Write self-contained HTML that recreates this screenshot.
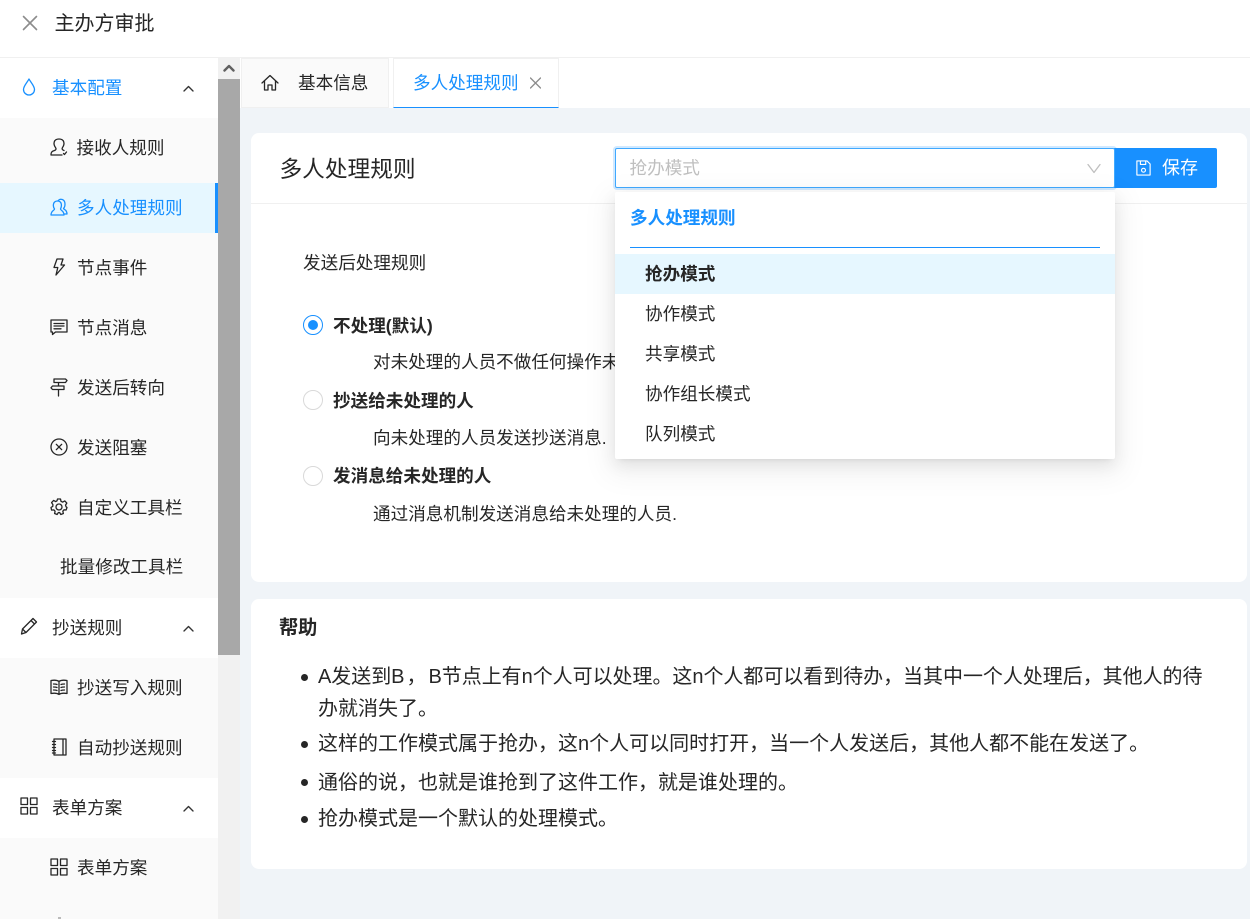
<!DOCTYPE html>
<html><head><meta charset="utf-8"><style>
*{box-sizing:border-box}
html,body{margin:0;padding:0;width:1250px;height:919px;overflow:hidden;background:#fff;
font-family:"Liberation Sans","Noto Sans CJK SC",sans-serif;color:#262626;font-size:17.6px}
.a{position:absolute;white-space:nowrap}
.t{position:absolute;white-space:nowrap;line-height:24px;height:24px}
.h{font-size:20px}
svg{position:absolute;fill:none;stroke:currentColor;stroke-width:1.3;stroke-linecap:round;stroke-linejoin:round}
b{font-weight:700}
</style></head><body>
<!-- header -->
<svg style="left:22px;top:15px;color:#8c8c8c;stroke-width:1.6" width="16" height="16" viewBox="0 0 16 16"><path d="M1.500 1.500l13 13M14.500 1.500l-13 13"/></svg>
<div class="t" style="left:54.500px;top:12px;font-size:20px">主办方审批</div>
<div class="a" style="left:0;top:57px;width:1250px;height:1px;background:#f0f0f0"></div>

<!-- sidebar -->
<div class="a" style="left:0;top:118px;width:218px;height:480px;background:#fafafa"></div>
<div class="a" style="left:0;top:658px;width:218px;height:120px;background:#fafafa"></div>
<div class="a" style="left:0;top:838px;width:218px;height:81px;background:#fafafa"></div>
<div class="a" style="left:0;top:183px;width:218px;height:50px;background:#e6f7ff"></div>
<div class="a" style="left:215px;top:183px;width:3px;height:50px;background:#1890ff"></div>
<div class="a" style="left:218px;top:58px;width:22px;height:861px;background:#f1f1f1"></div>
<div class="a" style="left:218px;top:79px;width:22px;height:576px;background:#a8a8a8"></div>
<svg style="left:223px;top:63px;color:#606060;stroke-width:2.400" width="12" height="10" viewBox="0 0 12 10"><path d="M1.500 7.500L6 3l4.500 4.500"/></svg>

<svg style="left:22px;top:78px;color:#1890ff" width="14" height="18" viewBox="0 0 14 18"><path d="M7 1C5.500 4 1.500 8 1.500 11.500a5.500 5.500 0 0 0 11 0C12.500 8 8.500 4 7 1z"/></svg>
<div class="t" style="left:52px;top:76px;color:#1890ff">基本配置</div>
<svg style="left:182px;top:84px;color:#333;stroke-width:1.400" width="13" height="9" viewBox="0 0 13 9"><path d="M2 7l4.500-4.500L11 7"/></svg>

<svg style="left:50px;top:138px" width="18" height="18" viewBox="0 0 18 18"><path d="M5.500 9.500C3 6 3.500 1 9 1s6 5 3.500 8.500c-1 1.500 0 2.500 1.500 3M5.500 9.500c1 1.500.5 2.500-1 3-2 .7-3.500 1-3.500 4.500h11"/><path d="M13.500 15.500l1 1 2-2.500"/></svg>
<div class="t" style="left:76.500px;top:136px">接收人规则</div>

<svg style="left:50px;top:198px;color:#1890ff" width="18" height="18" viewBox="0 0 18 18"><path d="M8 3c2-3 7-2 7 3 0 2-.5 3.500-1.500 4.500 0 1 3.500 1 3.500 5.500h-3M4.500 11C2.500 8 3 3 7.500 3S12 8 10.500 11c0 1.500 3.500 1.500 3.500 6H1c0-4.500 3.500-4.500 3.500-6z"/></svg>
<div class="t" style="left:77px;top:196px;color:#1890ff">多人处理规则</div>

<svg style="left:52px;top:258px" width="14" height="18" viewBox="0 0 14 18"><path d="M5 1h6L9 7h3.500L4 17l1.800-7.500H2z"/></svg>
<div class="t" style="left:77px;top:256px">节点事件</div>

<svg style="left:50px;top:319px" width="18" height="17" viewBox="0 0 18 17"><path d="M1 1h16v12H5.500L2.500 15.500V13H1z"/><path d="M4 4.500h10M4 7h10M4 9.800h7"/></svg>
<div class="t" style="left:77px;top:316px">节点消息</div>

<svg style="left:50px;top:378px" width="18" height="19" viewBox="0 0 18 19"><path d="M4 1h11.500L17 2.500 15.500 4.500H4zM14 8H2.500L1 9.800l1.500 1.700H14zM8.500 4.500V8M8.500 11.500V18"/></svg>
<div class="t" style="left:77px;top:376px">发送后转向</div>

<svg style="left:50px;top:438px" width="18" height="18" viewBox="0 0 18 18"><circle cx="9" cy="9" r="8"/><path d="M6.300 6.300l5.400 5.400M11.700 6.300l-5.400 5.400"/></svg>
<div class="t" style="left:77px;top:436px">发送阻塞</div>

<svg style="left:50px;top:498px" width="18" height="18" viewBox="0 0 18 18"><circle cx="9" cy="9" r="3"/><path d="M7.500 1h3l.5 2.300 1.700.8 2.100-1.200 2 2.200-1.300 2 .6 1.700L17 9.500l-.9 2.500-2.100-.2-1.200 1.400.6 2.300-2.600 1-1.200-2H8.400l-1.300 2-2.500-1 .5-2.300-1.200-1.300-2.300.2L1 9.500l1.800-1.200.1-1.700-1.300-2 2-2.200 2.100 1.200L7 2.800z"/></svg>
<div class="t" style="left:77px;top:496px">自定义工具栏</div>

<div class="t" style="left:60px;top:555px">批量修改工具栏</div>

<svg style="left:20px;top:617px" width="18" height="18" viewBox="0 0 18 18"><path d="M13 1.500l3.500 3.500L6 15.500 1.500 17 2.500 12zM11 3.500L14.500 7M2.500 12L6 15.500"/></svg>
<div class="t" style="left:52px;top:616px">抄送规则</div>
<svg style="left:182px;top:624px;color:#333;stroke-width:1.400" width="13" height="9" viewBox="0 0 13 9"><path d="M2 7l4.500-4.500L11 7"/></svg>

<svg style="left:50px;top:678px" width="18" height="18" viewBox="0 0 18 18"><path d="M1 2.500c3-.5 6-.5 8 1 2-1.500 5-1.500 8-1v13c-3-.5-6-.5-8 1-2-1.500-5-1.500-8-1zM9 3.500v13M3.500 6c1.200 0 2.500 0 3.500.5M3.500 9c1.200 0 2.500 0 3.500.5M3.500 12c1.200 0 2.500 0 3.500.5M14.500 6c-1.200 0-2.500 0-3.500.5M14.500 9c-1.200 0-2.500 0-3.500.5M14.500 12c-1.200 0-2.500 0-3.500.5"/></svg>
<div class="t" style="left:77px;top:676px">抄送写入规则</div>

<svg style="left:51px;top:738px" width="16" height="18" viewBox="0 0 16 18"><path d="M3 1h12v16H3zM12 1v16M1.500 3.500h3M1.500 6.500h3M1.500 9.500h3M1.500 12.500h3M1.500 15h3"/></svg>
<div class="t" style="left:77px;top:736px">自动抄送规则</div>

<svg style="left:20px;top:797px" width="18" height="18" viewBox="0 0 18 18"><path d="M1 1h6.500v6.500H1zM10.500 1H17v6.500h-6.500zM1 10.500h6.500V17H1zM10.500 10.500H17V17h-6.500z"/></svg>
<div class="t" style="left:52px;top:796px">表单方案</div>
<svg style="left:182px;top:804px;color:#333;stroke-width:1.400" width="13" height="9" viewBox="0 0 13 9"><path d="M2 7l4.500-4.500L11 7"/></svg>

<svg style="left:50px;top:858px" width="18" height="18" viewBox="0 0 18 18"><path d="M1 1h6.500v6.500H1zM10.500 1H17v6.500h-6.500zM1 10.500h6.500V17H1zM10.500 10.500H17V17h-6.500z"/></svg>
<div class="t" style="left:77px;top:856px">表单方案</div>
<div class="a" style="left:58px;top:917px;width:3px;height:2px;background:#bbb"></div>

<!-- content bg -->
<div class="a" style="left:240px;top:108px;width:1010px;height:811px;background:#f0f4f8"></div>

<!-- tabs -->
<div class="a" style="left:241px;top:58px;width:148px;height:50px;background:#fafafa;border:1px solid #f0f0f0"></div>
<svg style="left:261px;top:74px;color:#262626" width="18" height="18" viewBox="0 0 18 18"><path d="M1 9L9 1.500 17 9M3.500 7v9h3.500v-5h4v5h3.500V7"/></svg>
<div class="t" style="left:298px;top:71px">基本信息</div>
<div class="a" style="left:393px;top:58px;width:166px;height:50px;background:#fff;border:1px solid #f0f0f0;border-bottom:1px solid #1890ff"></div>
<div class="t" style="left:413px;top:71px;color:#1890ff">多人处理规则</div>
<svg style="left:530px;top:77px;color:#8c8c8c" width="11" height="12" viewBox="0 0 11 12"><path d="M.5 1l10 10M10.500 1L.5 11"/></svg>

<!-- card 1 -->
<div class="a" style="left:251px;top:133px;width:996px;height:449px;background:#fff;border-radius:8px"></div>
<div class="a" style="left:251px;top:203px;width:996px;height:1px;background:#f0f0f0"></div>
<div class="t" style="left:279.500px;top:156px;font-size:22.700px;height:26px;line-height:26px">多人处理规则</div>

<div class="t" style="left:303px;top:251px;font-size:17.600px">发送后处理规则</div>

<div class="a" style="left:303px;top:315px;width:20px;height:20px;border-radius:50%;border:1px solid #1890ff;background:#fff"></div>
<div class="a" style="left:308px;top:320px;width:10px;height:10px;border-radius:50%;background:#1890ff"></div>
<div class="t" style="left:333px;top:314px"><b>不处理(默认)</b></div>
<div class="t" style="left:373px;top:350px">对未处理的人员不做任何操作未</div>

<div class="a" style="left:303px;top:390px;width:20px;height:20px;border-radius:50%;border:1px solid #d9d9d9;background:#fff"></div>
<div class="t" style="left:333px;top:389px"><b>抄送给未处理的人</b></div>
<div class="t" style="left:373px;top:426px">向未处理的人员发送抄送消息.</div>

<div class="a" style="left:303px;top:466px;width:20px;height:20px;border-radius:50%;border:1px solid #d9d9d9;background:#fff"></div>
<div class="t" style="left:333px;top:464px"><b>发消息给未处理的人</b></div>
<div class="t" style="left:373px;top:502px">通过消息机制发送消息给未处理的人员.</div>

<!-- save button -->
<div class="a" style="left:1114px;top:148px;width:103px;height:40px;background:#1890ff;border-radius:0 2px 2px 0"></div>
<svg style="left:1136px;top:160px;color:#fff" width="15" height="16" viewBox="0 0 17 18"><path d="M1 1h11.500L16 4.500V17H1zM5 1v4h6V1"/><circle cx="8.500" cy="11.500" r="2.200"/></svg>
<div class="t" style="left:1162px;top:156px;color:#fff;font-size:18px">保存</div>

<!-- select -->
<div class="a" style="left:615px;top:148px;width:500px;height:40px;background:#fff;border:1px solid #40a9ff;border-radius:2px;box-shadow:0 0 0 2px rgba(24,144,255,.2)"></div>
<div class="t" style="left:629.500px;top:156px;color:#bfbfbf">抢办模式</div>
<svg style="left:1087px;top:163px;color:#bfbfbf" width="14" height="11" viewBox="0 0 14 11"><path d="M1 1.500l6 8 6-8"/></svg>

<!-- dropdown -->
<div class="a" style="left:615px;top:192px;width:500px;height:267px;background:#fff;border-radius:2px;box-shadow:0 3px 6px -4px rgba(0,0,0,.12),0 6px 16px 0 rgba(0,0,0,.08),0 9px 28px 8px rgba(0,0,0,.05)"></div>
<div class="t" style="left:630px;top:206px;color:#1890ff"><b>多人处理规则</b></div>
<div class="a" style="left:630px;top:247px;width:470px;height:1px;background:#1890ff"></div>
<div class="a" style="left:615px;top:254px;width:500px;height:40px;background:#e6f7ff"></div>
<div class="t" style="left:645px;top:262px"><b>抢办模式</b></div>
<div class="t" style="left:645px;top:302px">协作模式</div>
<div class="t" style="left:645px;top:342px">共享模式</div>
<div class="t" style="left:645px;top:382px">协作组长模式</div>
<div class="t" style="left:645px;top:422px">队列模式</div>

<!-- card 2 -->
<div class="a" style="left:251px;top:599px;width:996px;height:270px;background:#fff;border-radius:8px"></div>
<div class="t" style="left:279px;top:617px;font-size:19.200px"><b>帮助</b></div>
<div class="a" style="left:301px;top:674px;width:7px;height:7px;border-radius:50%;background:#262626"></div>
<div class="t h" style="left:318px;top:665px;word-spacing:-3.500px;letter-spacing:-.04px">A发送到B ， B节点上有n个人可以处理。这n个人都可以看到待办，当其中一个人处理后，其他人的待</div>
<div class="t h" style="left:318px;top:697px">办就消失了。</div>
<div class="a" style="left:301px;top:741px;width:7px;height:7px;border-radius:50%;background:#262626"></div>
<div class="t h" style="left:318px;top:732px">这样的工作模式属于抢办，这n个人可以同时打开，当一个人发送后，其他人都不能在发送了。</div>
<div class="a" style="left:301px;top:779px;width:7px;height:7px;border-radius:50%;background:#262626"></div>
<div class="t h" style="left:318px;top:771px">通俗的说，也就是谁抢到了这件工作，就是谁处理的。</div>
<div class="a" style="left:301px;top:816px;width:7px;height:7px;border-radius:50%;background:#262626"></div>
<div class="t h" style="left:318px;top:807px">抢办模式是一个默认的处理模式。</div>
</body></html>
